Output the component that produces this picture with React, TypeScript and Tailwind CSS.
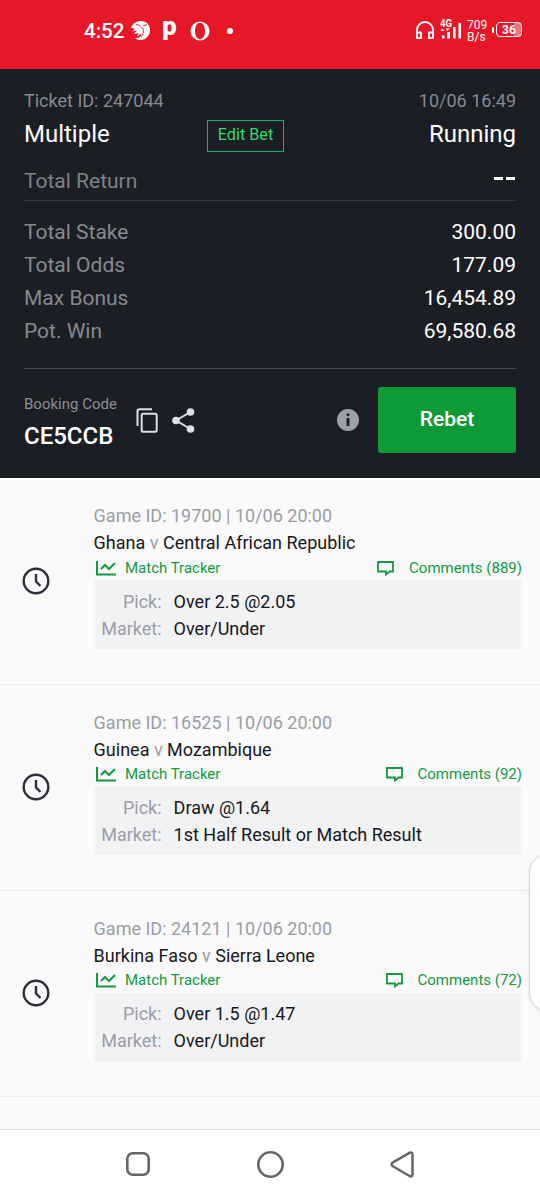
type Bet = {
  gameId: string;
  kickoff: string;
  home: string;
  away: string;
  comments: number;
  pick: string;
  market: string;
};

const TOTALS = [
  { label: 'Total Stake', value: '300.00' },
  { label: 'Total Odds', value: '177.09' },
  { label: 'Max Bonus', value: '16,454.89' },
  { label: 'Pot. Win', value: '69,580.68' },
];

const BETS: Bet[] = [
  {
    gameId: '19700',
    kickoff: '10/06 20:00',
    home: 'Ghana',
    away: 'Central African Republic',
    comments: 889,
    pick: 'Over 2.5 @2.05',
    market: 'Over/Under',
  },
  {
    gameId: '16525',
    kickoff: '10/06 20:00',
    home: 'Guinea',
    away: 'Mozambique',
    comments: 92,
    pick: 'Draw @1.64',
    market: '1st Half Result or Match Result',
  },
  {
    gameId: '24121',
    kickoff: '10/06 20:00',
    home: 'Burkina Faso',
    away: 'Sierra Leone',
    comments: 72,
    pick: 'Over 1.5 @1.47',
    market: 'Over/Under',
  },
];

function StatusBar() {
  return (
    <div className="flex h-[69px] items-center justify-between bg-[#e61827] pt-[1px] pb-[9px] pr-[18px] pl-[84px] text-white">
      <div className="flex items-center">
        <span className="w-[47px] text-[20.500px] leading-6 font-medium">4:52</span>
        <svg width="19" height="19" viewBox="0 0 19 19" fill="none">
          <path d="M0 7C2 2 5.500 0 10 0c5.500 0 9 4 9 9 0 5.500-4 10-9.500 10-2 0-4-.5-5.500-1.800 4 .3 6.500-2 6.500-4.700L6 15.500l1.800-3.500-4.800 1L6 9.500 1.500 10.200 4 7.500z" fill="white" />
          <path d="M5 3.500c3 .2 5.500 1.500 6.500 4.500M12 7.500c1 3 .3 6.500-2 8.500M12 5l4-1.500" stroke="#e61827" strokeWidth=".9" />
        </svg>
        <span className="-mt-[10px] ml-3 w-[18px] text-[26px] leading-6 font-black">p</span>
        <svg className="ml-[10px]" width="20" height="20" viewBox="0 0 20 20">
          <path fillRule="evenodd" d="M10 .5a9.500 9.500 0 1 0 0 19 9.500 9.500 0 0 0 0-19zM10 1.800c2.900 0 5 3.500 5 8.200s-2.100 8.200-5 8.200-5-3.500-5-8.200 2.100-8.200 5-8.200z" fill="white" />
        </svg>
        <span className="ml-[17px] h-[6px] w-[6px] rounded-full bg-white" />
      </div>

      <div className="flex items-center">
        <svg width="18" height="20" viewBox="0 0 18 20" fill="none" stroke="white" strokeWidth="1.800">
          <path d="M1 16.500V9a8 8 0 0 1 16 0v7.500" />
          <path d="M1 11.500h4v5.600H1zM17 11.500h-4v5.600h4z" strokeLinejoin="round" />
        </svg>
        <svg className="-mt-[3px] ml-[6px]" width="21" height="22" viewBox="0 0 21 22">
          <g fill="white">
            <rect x="2" y="17.500" width="2.500" height="3" />
            <rect x="7" y="14" width="3" height="6.500" />
            <rect x="13" y="9" width="2.500" height="11.500" />
            <rect x="18.500" y="5" width="2.500" height="15.500" />
            <path d="M.5 13l2-2.500 2 2.500zM5.500 10.500h4l-2 2.500z" />
          </g>
          <text x="0" y="9" fill="white" fontSize="11" fontWeight="700" fontFamily="Roboto, sans-serif" textLength="12" lengthAdjust="spacingAndGlyphs">4G</text>
        </svg>
        <div className="ml-[6px] w-[25px] text-[12px] leading-[12px]">
          <div>709</div>
          <div>B/s</div>
        </div>
        <span className="mb-[2px] h-[6px] w-[2px] rounded-sm bg-white" />
        <span className="mb-[2px] ml-[2px] flex h-[15px] w-[26px] items-center justify-center rounded-[4px] border border-white bg-linear-to-r from-transparent from-70% to-white/40 to-70% text-[12px] leading-none font-bold">
          36
        </span>
      </div>
    </div>
  );
}

function TicketSummary() {
  return (
    <section className="h-[409.400px] bg-[#1b1e25] px-6 pt-[18px] text-[20px] text-white">
      <div className="flex h-[27px] items-center justify-between text-[18px] text-[#868a91]">
        <span>Ticket ID: 247044</span>
        <span>10/06 16:49</span>
      </div>
      <div className="flex h-[39px] items-center text-[24px]">
        <span className="w-[183px]">Multiple</span>
        <button className="mt-[4px] h-[32px] w-[77px] border border-[#28a95c] text-[16.200px] text-[#30dc67]">
          Edit Bet
        </button>
        <span className="ml-auto">Running</span>
      </div>
      <div className="flex h-[48px] items-center justify-between border-b border-[#353941] pt-[10px] text-[21px] text-[#7d8188]">
        <span>Total Return</span>
        <span className="flex gap-[3px] pr-[1px] pb-[7px]">
          <i className="h-[3px] w-[9px] bg-white" />
          <i className="h-[3px] w-[9px] bg-white" />
        </span>
      </div>

      <dl className="border-b border-[#44484f] pt-[15px] pb-5 text-[21px]">
        {TOTALS.map((row) => (
          <div key={row.label} className="flex h-[33px] items-center justify-between">
            <dt className="text-[#868a91]">{row.label}</dt>
            <dd>{row.value}</dd>
          </div>
        ))}
      </dl>

      <div className="flex items-center pt-[18px]">
        <div className="w-[112px]">
          <div className="pt-[3px] text-[15px] leading-6 whitespace-nowrap text-[#8b8f96]">Booking Code</div>
          <div className="mt-[5px] text-[24px] leading-[30px] font-medium">CE5CCB</div>
        </div>
        <svg width="22" height="25" viewBox="0 0 22 25" fill="none" stroke="#dcdfe8" strokeWidth="2">
          <path d="M1.500 18V3Q1.500 1.200 3.300 1.200H16" />
          <rect x="5.700" y="5.700" width="15" height="18" rx="1.500" />
        </svg>
        <svg className="ml-[14px]" width="23" height="25" viewBox="0 0 23 25" fill="#dcdfe8">
          <path d="M18.500 4L4 12.500l14.500 8.500" fill="none" stroke="#dcdfe8" strokeWidth="2" />
          <circle cx="18.500" cy="4" r="3.800" />
          <circle cx="4" cy="12.500" r="3.800" />
          <circle cx="18.500" cy="21" r="3.800" />
        </svg>
        <svg className="ml-auto" width="22" height="22" viewBox="0 0 22 22">
          <circle cx="11" cy="11" r="11" fill="#9ca0ab" />
          <circle cx="11" cy="5.800" r="1.500" fill="#1b1e25" />
          <rect x="9.500" y="9" width="3" height="8" fill="#1b1e25" />
        </svg>
        <button className="ml-[19px] h-[66px] w-[138px] rounded-[3px] bg-[#0f9a38] text-[21px] font-medium">
          Rebet
        </button>
      </div>
    </section>
  );
}

function BetRow({ bet }: { bet: Bet }) {
  return (
    <article className="flex h-[206.200px] items-center border-b border-[#e9eaeb] pr-[18px] pl-[22px]">
      <svg className="mr-[43.600px] shrink-0" width="28" height="28" viewBox="0 0 28 28" fill="none" stroke="#2c303d">
        <circle cx="14" cy="14" r="12.300" strokeWidth="2.400" />
        <path d="M14 7v7.500l4.500 4.500" strokeWidth="2.400" />
      </svg>
      <div className="mt-[-10.600px] flex-1 text-[18px] leading-[27px] text-[#17181c]">
        <div className="text-[#9a9da8]">
          Game ID: {bet.gameId} | {bet.kickoff}
        </div>
        <div>
          {bet.home} <span className="text-[#9a9da8]">v</span> {bet.away}
        </div>
        <div className="flex h-6 items-center text-[15px] text-[#129a3f]">
          <svg className="mr-[9.400px] ml-[2px]" width="20" height="15" viewBox="0 0 20 15" fill="none" stroke="currentColor" strokeWidth="2">
            <path d="M1 0v13.500h19" />
            <path d="M5 8l4-4 4 4 6-6" />
          </svg>
          <span>Match Tracker</span>
          <svg className="mr-[15px] ml-auto" width="17" height="15" viewBox="0 0 17 15" fill="none" stroke="currentColor" strokeWidth="1.800">
            <path d="M1 1h15v9.500h-3.500L9 13.500v-3H1z" />
          </svg>
          <span>Comments ({bet.comments})</span>
        </div>
        <div className="bg-[#f1f2f4] pt-[7.400px] pb-[7px]">
          <div className="flex">
            <span className="mr-3 w-[68px] text-right text-[#9a9da8]">Pick:</span>
            <span>{bet.pick}</span>
          </div>
          <div className="flex">
            <span className="mr-3 w-[68px] text-right text-[#9a9da8]">Market:</span>
            <span>{bet.market}</span>
          </div>
        </div>
      </div>
    </article>
  );
}

function NavigationBar() {
  return (
    <nav className="flex h-[71px] items-center justify-between border-t border-[#dadada] bg-white px-[126px] pb-[2px]">
      <svg width="24" height="24" viewBox="0 0 24 24" fill="none" stroke="#666" strokeWidth="2.600">
        <rect x="1.300" y="1.300" width="21.400" height="21.400" rx="5.500" />
      </svg>
      <svg width="27" height="27" viewBox="0 0 27 27" fill="none" stroke="#666" strokeWidth="2.600">
        <circle cx="13.500" cy="13.500" r="12.200" />
      </svg>
      <svg width="24" height="27" viewBox="0 0 24 27" fill="none" stroke="#666" strokeWidth="2.500" strokeLinejoin="round">
        <path d="M19.500 1.800L2.500 11.700Q.6 13.500 2.500 15L19.500 25Q22.500 26 22.500 23.500V3.500Q22.500.8 19.500 1.800z" />
      </svg>
    </nav>
  );
}

export default function App() {
  return (
    <div className="relative flex h-[1200px] w-[540px] flex-col overflow-hidden bg-[#fafafa] font-['Roboto',sans-serif]">
      <StatusBar />
      <TicketSummary />
      <main className="flex-1">
        {BETS.map((bet) => (
          <BetRow key={bet.gameId} bet={bet} />
        ))}
      </main>
      <NavigationBar />
      {/* edge panel handle */}
      <div className="absolute top-[853px] -right-[34px] h-[159px] w-[45px] rounded-[20px] border border-[#d5d5d5] bg-white/90 shadow-sm" />
    </div>
  );
}
